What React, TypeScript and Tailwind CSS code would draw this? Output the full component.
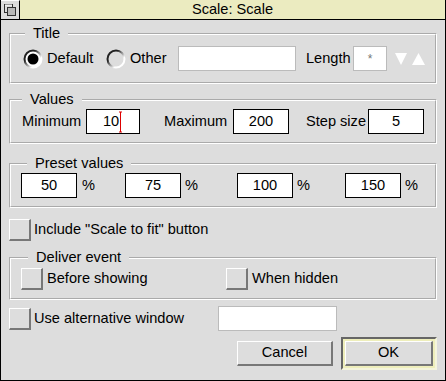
import React from "react";

function Radio({ on }: { on?: boolean }) {
  return (
    <svg width="20" height="20" viewBox="0 0 20 20" className="shrink-0">
      <defs>
        <linearGradient id="radioEdge" x1="0" y1="0" x2="1" y2="1">
          <stop offset="0.3" stopColor="#222222" />
          <stop offset="0.7" stopColor="#ffffff" />
        </linearGradient>
      </defs>
      <circle cx="10" cy="10" r="8.5" fill={on ? "#ffffff" : "#dddddd"} stroke="url(#radioEdge)" strokeWidth="2" />
      {on && <circle cx="10" cy="10" r="5.5" fill="#000000" />}
    </svg>
  );
}

function Check() {
  return (
    <div className="w-[22px] h-[22px] shrink-0 bg-[#dddddd] border-t border-l border-t-white border-l-white border-r-2 border-b-2 border-r-[#777777] border-b-[#777777]" />
  );
}

function Field({ className, children }: { className: string; children?: React.ReactNode }) {
  return (
    <div className={`h-[25px] shrink-0 bg-white border border-black flex items-center justify-center ${className}`}>
      {children}
    </div>
  );
}

function Label({ className, children }: { className: string; children: React.ReactNode }) {
  return <span className={`shrink-0 whitespace-nowrap ${className}`}>{children}</span>;
}

function Group({
  label,
  labelPos,
  className,
  children,
}: {
  label: string;
  labelPos: string;
  className: string;
  children: React.ReactNode;
}) {
  return (
    <div
      className={`relative shrink-0 border border-t-[#aaaaaa] border-l-[#aaaaaa] border-r-white border-b-white ${className}`}
    >
      <div className="h-full border border-t-white border-l-white border-r-[#aaaaaa] border-b-[#aaaaaa] flex items-center">
        {children}
      </div>
      <span className={`absolute top-[-9px] px-2 h-[16px] leading-[16px] whitespace-nowrap bg-[#dddddd] ${labelPos}`}>
        {label}
      </span>
    </div>
  );
}

export default function App() {
  return (
    <div className="w-[446px] h-[381px] bg-[#dddddd] border-l border-r border-b border-black flex flex-col text-[14.6px] text-black font-['Liberation_Sans',Arial,sans-serif]">
      {/* title bar */}
      <div className="flex h-[20px] shrink-0 border-b border-black">
        <div className="w-[19px] h-full border-r border-black bg-[#dddddd] border-t border-t-white">
          <svg width="18" height="18" viewBox="0 0 18 18">
            <rect x="3.5" y="3.5" width="8" height="8" fill="#dddddd" stroke="#333333" />
            <rect x="6.5" y="6.5" width="8" height="8" fill="#bbbbbb" stroke="#333333" />
            <line x1="4" y1="4" x2="11" y2="4" stroke="#ffffff" />
          </svg>
        </div>
        <div className="flex-1 bg-[#ebebc0] flex items-center justify-center leading-none">Scale: Scale</div>
      </div>

      <div className="flex-1 px-2 flex flex-col">
        {/* Title */}
        <Group label="Title" labelPos="left-[15px]" className="mt-[13px] h-[51px]">
          <div className="ml-[12px] shrink-0">
            <Radio on />
          </div>
          <Label className="ml-[4px] w-[46px]">Default</Label>
          <div className="ml-[13px] shrink-0">
            <Radio />
          </div>
          <Label className="ml-[4px] w-[36px]">Other</Label>
          <div className="ml-[12px] w-[118px] h-[25px] shrink-0 bg-white border border-[#bbbbbb]" />
          <Label className="ml-[10px] w-[44px]">Length</Label>
          <div className="ml-[3px] w-[34px] h-[25px] shrink-0 bg-white border border-[#bbbbbb] flex justify-center pt-[3px] text-[#777777] text-[12px]">
            *
          </div>
          <svg className="ml-[8px] shrink-0" width="12" height="12" viewBox="0 0 12 12">
            <polygon points="0,0 12,0 6,12" fill="#ffffff" />
          </svg>
          <svg className="ml-[5px] shrink-0" width="13" height="12" viewBox="0 0 13 12">
            <polygon points="6.5,0 13,12 0,12" fill="#ffffff" />
          </svg>
        </Group>

        {/* Values */}
        <Group label="Values" labelPos="left-[12px]" className="mt-[15px] h-[45px]">
          <Label className="ml-[11px] w-[59px]">Minimum</Label>
          <Field className="ml-[5px] w-[54px]">
            <span>10</span>
            <svg width="5" height="22" viewBox="0 0 5 22" className="-ml-[1px]">
              <line x1="2.5" y1="1" x2="2.5" y2="21" stroke="#dd0000" />
              <line x1="1" y1="1" x2="4" y2="1" stroke="#dd0000" />
              <line x1="1" y1="21" x2="4" y2="21" stroke="#dd0000" />
            </svg>
          </Field>
          <Label className="ml-[24px] w-[64px]">Maximum</Label>
          <Field className="ml-[5px] w-[56px]">200</Field>
          <Label className="ml-[17px] w-[59px]">Step size</Label>
          <Field className="ml-[3px] w-[56px]">5</Field>
        </Group>

        {/* Preset values */}
        <Group label="Preset values" labelPos="left-[17px]" className="mt-[19px] h-[45px]">
          <Field className="ml-[10px] w-[56px] h-[24px]">50</Field>
          <Label className="ml-[5px] w-[12px]">%</Label>
          <Field className="ml-[31px] w-[56px] h-[24px]">75</Field>
          <Label className="ml-[4px] w-[12px]">%</Label>
          <Field className="ml-[40px] w-[56px] h-[24px]">100</Field>
          <Label className="ml-[4px] w-[12px]">%</Label>
          <Field className="ml-[36px] w-[56px] h-[24px]">150</Field>
          <Label className="ml-[4px] w-[12px]">%</Label>
        </Group>

        {/* Scale to fit */}
        <div className="mt-[11px] h-[22px] flex items-center shrink-0">
          <Check />
          <Label className="ml-[3px]">Include "Scale to fit" button</Label>
        </div>

        {/* Deliver event */}
        <Group label="Deliver event" labelPos="left-[18px]" className="mt-[16px] h-[43px]">
          <div className="ml-[10px] shrink-0">
            <Check />
          </div>
          <Label className="ml-[4px] w-[106px]">Before showing</Label>
          <div className="ml-[73px] shrink-0">
            <Check />
          </div>
          <Label className="ml-[4px]">When hidden</Label>
        </Group>

        {/* Alternative window */}
        <div className="mt-[6px] h-[25px] flex items-center shrink-0">
          <Check />
          <Label className="ml-[3px] w-[150px]">Use alternative window</Label>
          <div className="ml-[34px] w-[119px] h-[25px] shrink-0 bg-white border border-[#bbbbbb]" />
        </div>

        {/* Buttons */}
        <div className="mt-[6px] h-[33px] flex items-center justify-end gap-[8px] shrink-0">
          <button className="w-[96px] h-[25px] bg-[#dddddd] border-t border-l border-t-white border-l-white border-r-2 border-b-2 border-r-[#777777] border-b-[#777777] flex items-center justify-center">
            Cancel
          </button>
          <div className="w-[96px] h-[33px] border-2 border-t-[#666666] border-l-[#666666] border-r-[#f4f4dc] border-b-[#f4f4dc] bg-[#eeeebb] p-[2px]">
            <button className="w-full h-full bg-[#dddddd] border-t border-l border-t-white border-l-white border-r-2 border-b-2 border-r-[#777777] border-b-[#777777] flex items-center justify-center">
              OK
            </button>
          </div>
        </div>
      </div>
    </div>
  );
}
